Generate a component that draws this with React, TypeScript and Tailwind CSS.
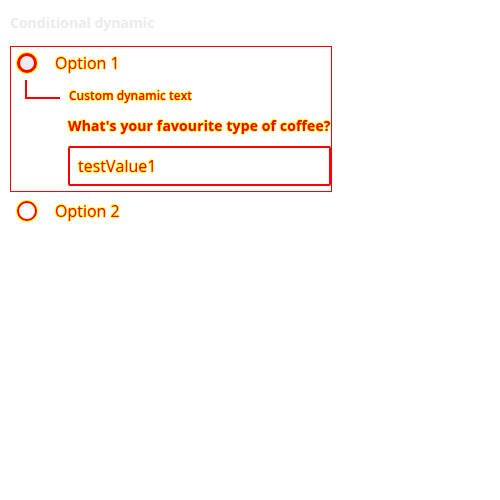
export default function App() {
  const glow = "[text-shadow:0.6px_0_0_#ffff00,-0.6px_0_0_#ffff00,0_0.6px_0_#ffff00,0_-0.6px_0_#ffff00]";
  return (
    <div className="w-[500px] h-[500px] bg-white font-['Open_Sans',sans-serif]">
      <div className="px-[10px] pt-[13px]">
        {/* TITLE */}
        <h1 className="text-[14px] font-bold text-[#ececec] leading-[20px]">Conditional dynamic</h1>

        {/* OPTION 1 */}
        <div className="mt-[13px] w-[322px] border border-[#ff0000] pb-[5px]">
          <div className="flex items-center h-[32px] pl-[6px]">
            <span className="w-[20px] h-[20px] rounded-full border-[3px] border-[#ff0000] bg-[#ececec] shadow-[0_0_0_1px_#ffff00]" />
            <span className={`ml-[18px] text-[16px] text-[#ff0000] ${glow}`}>Option 1</span>
          </div>
          <div className="flex items-start">
            <div className="ml-[14px] mt-[1px] w-[35px] h-[19px] border-l-2 border-b-2 border-[#ff0000]" />
            <span className={`ml-[9px] mt-[9px] text-[12px] font-semibold text-[#ff0000] leading-[16px] ${glow}`}>Custom dynamic text</span>
          </div>
          <div className="pl-[57px] pt-[13px]">
            <p className={`text-[14px] font-bold tracking-[0.12px] text-[#ff0000] leading-[18px] ${glow}`}>What's your favourite type of coffee?</p>
            <div className="mt-[11px] h-[40px] w-[263px] border-2 border-[#ff0000] rounded-[2px] flex items-center px-[8px]">
              <span className={`text-[16px] text-[#ff0000] ${glow}`}>testValue1</span>
            </div>
          </div>
        </div>

        {/* OPTION 2 */}
        <div className="flex items-center h-[38px] pl-[7px]">
          <span className="w-[20px] h-[20px] rounded-full border-2 border-[#ff0000] bg-white shadow-[0_0_0_1px_#ffff00]" />
          <span className={`ml-[18px] text-[16px] text-[#ff0000] ${glow}`}>Option 2</span>
        </div>
      </div>
    </div>
  );
}
